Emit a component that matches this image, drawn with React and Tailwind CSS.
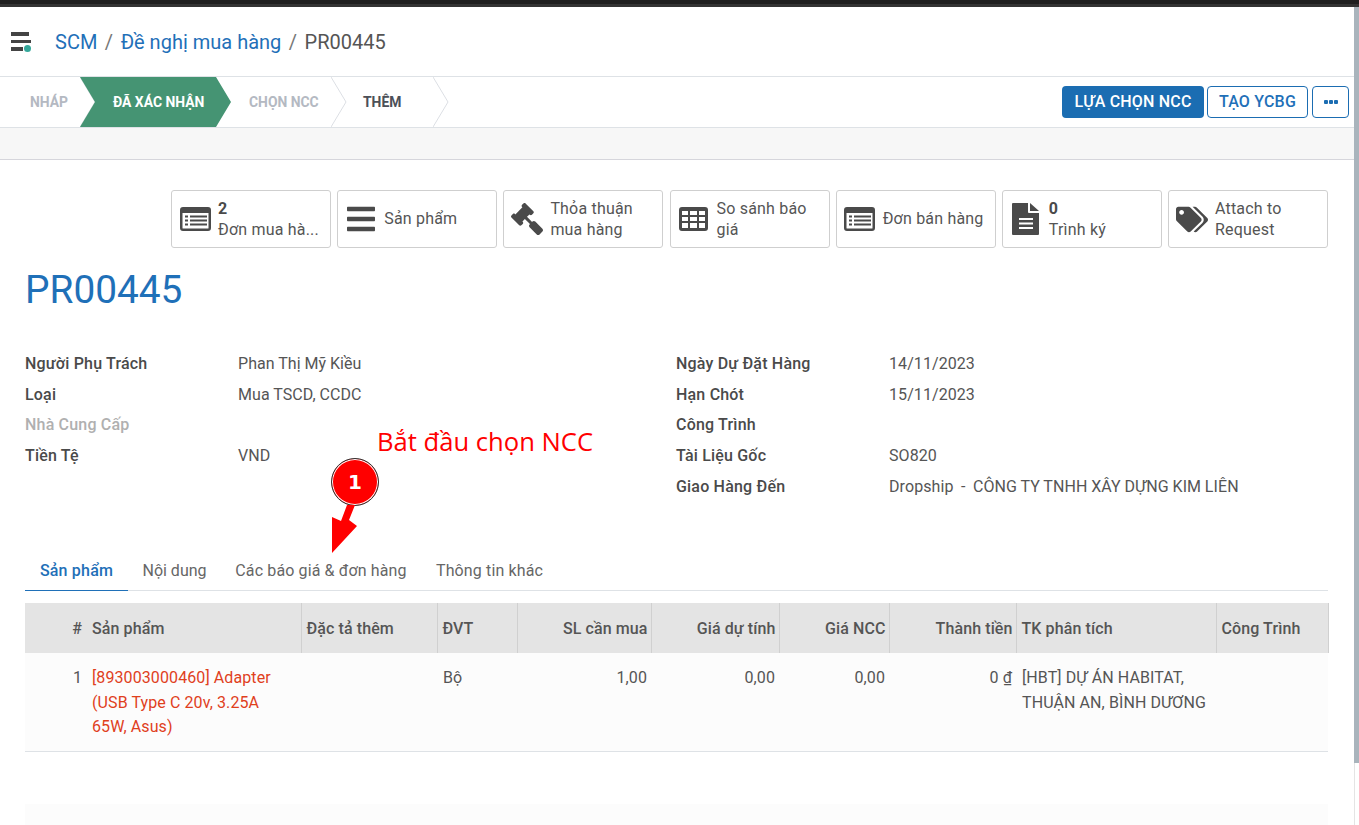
import React from 'react';
import { FaBars, FaGavel, FaTags } from 'react-icons/fa';

const ListAltIcon = () => (
  <svg viewBox="0 0 31 24" className="h-[24px] w-[31px]">
    <path fill="#4a4a4a" fillRule="evenodd" d="M3 0h25a3 3 0 0 1 3 3v18a3 3 0 0 1-3 3H3a3 3 0 0 1-3-3V3a3 3 0 0 1 3-3zM2.500 6v15a.5.5 0 0 0 .5.5h25a.5.5 0 0 0 .5-.5V6z" />
    <path fill="#4a4a4a" d="M5 8.500h3v2H5zM10 8.500h17v2H10zM5 12.500h3v2H5zM10 12.500h17v2H10zM5 16.500h3v2H5zM10 16.500h17v2H10z" />
  </svg>
);

const TableIcon = () => (
  <svg viewBox="0 0 29 24" className="h-[24px] w-[29px]">
    <path fill="#4a4a4a" fillRule="evenodd" d="M3 0h23a3 3 0 0 1 3 3v18a3 3 0 0 1-3 3H3a3 3 0 0 1-3-3V3a3 3 0 0 1 3-3zM3 4v4h6V4zM11 4v4h7V4zM20 4v4h6V4zM3 10v4h6v-4zM11 10v4h7v-4zM20 10v4h6v-4zM3 16v5h6v-5zM11 16v5h7v-5zM20 16v5h6v-5z" />
  </svg>
);

const FileIcon = () => (
  <svg viewBox="0 0 27 32" className="h-[32px] w-[27px]">
    <path fill="#4a4a4a" d="M1 0h15v9a1 1 0 0 0 1 1h10v21a1 1 0 0 1-1 1H1a1 1 0 0 1-1-1V1a1 1 0 0 1 1-1z" />
    <path fill="#4a4a4a" d="M18 0l9 8h-9z" />
    <path fill="#fff" d="M7 15h14v2H7zM7 19.500h14v2H7zM7 24h14v2H7z" />
  </svg>
);

const steps = [
  { label: 'NHÁP', width: 'w-[80px]', pad: 'pl-[30px]', color: 'text-[#b4b9c2]' },
  { label: 'ĐÃ XÁC NHẬN', width: 'w-[136px]', pad: 'pl-[33px]', color: 'text-white', active: true },
  { label: 'CHỌN NCC', width: 'w-[115px]', pad: 'pl-[33px]', color: 'text-[#b4b9c2]' },
  { label: 'THÊM', width: 'w-[102px]', pad: 'pl-[32px]', color: 'text-[#4c5058]' },
];

const smartButtons = [
  { icon: <ListAltIcon />, lines: ['2', 'Đơn mua hà...'], count: true },
  { icon: <FaBars className="h-[32px] w-[28px]" />, lines: ['Sản phẩm'] },
  { icon: <FaGavel className="h-[32px] w-[32px] -scale-x-100" />, lines: ['Thỏa thuận', 'mua hàng'] },
  { icon: <TableIcon />, lines: ['So sánh báo', 'giá'] },
  { icon: <ListAltIcon />, lines: ['Đơn bán hàng'] },
  { icon: <FileIcon />, lines: ['0', 'Trình ký'], count: true },
  { icon: <FaTags className="h-[29px] w-[36px]" />, lines: ['Attach to', 'Request'] },
];

const leftFields = [
  ['Người Phụ Trách', 'Phan Thị Mỹ Kiều'],
  ['Loại', 'Mua TSCD, CCDC'],
  ['Nhà Cung Cấp', '', true],
  ['Tiền Tệ', 'VND'],
];

const rightFields = [
  ['Ngày Dự Đặt Hàng', '14/11/2023'],
  ['Hạn Chót', '15/11/2023'],
  ['Công Trình', ''],
  ['Tài Liệu Gốc', 'SO820'],
  ['Giao Hàng Đến', 'Dropship  -  CÔNG TY TNHH XÂY DỰNG KIM LIÊN'],
];

const tabs = [
  { label: 'Sản phẩm', width: 'w-[103px]', track: 'tracking-[0.012em]' },
  { label: 'Nội dung', width: 'w-[93px]', track: 'tracking-normal' },
  { label: 'Các báo giá & đơn hàng', width: 'w-[200px]', track: 'tracking-[0.008em]' },
  { label: 'Thông tin khác', width: 'w-[137px]', track: 'tracking-[0.008em]' },
];

const columns = [
  { label: '#', width: 'w-[62px]', align: 'text-right pr-[5px]' },
  { label: 'Sản phẩm', width: 'w-[214px]', align: 'text-left px-[5px] border-r border-[#d0d0d0]' },
  { label: 'Đặc tả thêm', width: 'w-[136px]', align: 'text-left px-[5px] border-r border-[#d0d0d0]' },
  { label: 'ĐVT', width: 'w-[80px]', align: 'text-left px-[5px] border-r border-[#d0d0d0]' },
  { label: 'SL cần mua', width: 'w-[134px]', align: 'text-right pl-[4px] pr-[3px] border-r border-[#d0d0d0]' },
  { label: 'Giá dự tính', width: 'w-[128px]', align: 'text-right pl-[4px] pr-[3px] border-r border-[#d0d0d0]' },
  { label: 'Giá NCC', width: 'w-[110px]', align: 'text-right pl-[4px] pr-[3px] border-r border-[#d0d0d0]' },
  { label: 'Thành tiền', width: 'w-[127px]', align: 'text-right pl-[4px] pr-[3px] border-r border-[#d0d0d0]' },
  { label: 'TK phân tích', width: 'w-[200px]', align: 'text-left px-[5px] border-r border-[#d0d0d0]' },
  { label: 'Công Trình', width: 'w-[112px]', align: 'text-left px-[5px] border-r border-[#d0d0d0]' },
];

function FieldList({ fields, labelWidth }) {
  return (
    <div className="flex flex-col">
      {fields.map(([label, value, muted]) => (
        <div key={label} className="flex h-[30.7px] items-center">
          <div className={`${labelWidth} shrink-0 font-medium ${muted ? 'text-[#b0b0b0]' : 'text-[#4a4a4a]'}`}>{label}</div>
          <div className="whitespace-pre tracking-[0.005em] text-[#555] [word-spacing:-0.3px]">{value}</div>
        </div>
      ))}
    </div>
  );
}

export default function App() {
  return (
    <div className="relative flex h-[825px] w-full flex-col overflow-hidden bg-white font-['Roboto',sans-serif] text-base tracking-[0.012em] text-[#4a4a4a]">
      {/* Browser strip */}
      <div className="h-[7px] shrink-0 border-b-[3px] border-[#333] bg-[#1f1f1f]" />

      <div className="flex min-h-0 flex-1">
        <div className="min-w-0 flex-1">
          {/* Breadcrumb */}
          <div className="flex h-[69px] items-center">
            <svg viewBox="0 0 21 20" className="ml-[11px] h-[20px] w-[21px]">
              <path fill="#444" d="M0 0h18v4H0zM0 8h20v3H0zM0 15h12v4H0z" />
              <circle cx="16.500" cy="16.500" r="3.500" fill="#35a89b" />
            </svg>
            <div className="ml-[23px] flex items-center text-[20px] tracking-normal text-[#1f70b8]">
              <span>SCM</span>
              <span className="mx-[7.500px] text-[#777]">/</span>
              <span>Đề nghị mua hàng</span>
              <span className="mx-[7.500px] text-[#777]">/</span>
              <span className="text-[#555]">PR00445</span>
            </div>
          </div>

          {/* Status bar */}
          <div className="flex h-[52px] items-center justify-between border-y border-[#dee2e6] pr-[5px]">
            <div className="flex h-full">
              {steps.map((s) => (
                <div key={s.label} className={`relative flex h-full items-center ${s.width} ${s.pad}`}>
                  {s.active ? (
                    <svg viewBox="0 0 151 50" className="absolute left-0 top-0 h-full w-[151px]" preserveAspectRatio="none">
                      <path fill="#459473" d="M0 0h136l15 25-15 25H0l15-25z" />
                    </svg>
                  ) : (
                    <svg viewBox="0 0 16 50" className="absolute left-full top-0 h-full w-[16px]" preserveAspectRatio="none">
                      <path fill="none" stroke="#dcdfe4" d="M0 0l15 25L0 50" />
                    </svg>
                  )}
                  <span className={`relative whitespace-nowrap text-[13.900px] font-bold leading-[20px] tracking-normal ${s.color}`}>{s.label}</span>
                </div>
              ))}
            </div>
            <div className="flex items-center gap-[3px]">
              <button className="h-[32px] w-[142px] rounded-[4px] bg-[#1b6db2] text-[16px] font-medium text-white">LỰA CHỌN NCC</button>
              <button className="h-[32px] w-[101px] rounded-[4px] border border-[#1b6db2] bg-white text-[16px] font-medium text-[#1f70b8]">TẠO YCBG</button>
              <button className="ml-[1px] flex h-[32px] w-[37px] items-center justify-center gap-[1px] rounded-[4px] border border-[#1b6db2] bg-white">
                <span className="h-[4px] w-[4px] rounded-[1px] bg-[#1b6db2]" />
                <span className="h-[4px] w-[4px] rounded-[1px] bg-[#1b6db2]" />
                <span className="h-[4px] w-[4px] rounded-[1px] bg-[#1b6db2]" />
              </button>
            </div>
          </div>

          {/* Gray strip */}
          <div className="h-[32px] border-b border-[#d6d6dc] bg-[#f7f7f7]" />

          {/* Sheet */}
          <div className="w-[1328px] pl-[25px] pt-[30px]">
            <div className="flex justify-end gap-[6.170px]">
              {smartButtons.map((b, i) => (
                <div key={i} className="flex h-[58px] w-[160px] items-center rounded-[3px] border border-[#cfcfcf] pl-[7px]">
                  <div className="flex w-[32px] shrink-0 justify-center text-[#4a4a4a]">{b.icon}</div>
                  <div className={`pl-[7px] leading-[21px] text-[#555] ${b.lines.length === 1 ? 'mb-[2px]' : ''}`}>
                    {b.lines.map((line, j) => (
                      <div key={j} className={b.count && j === 0 ? 'font-bold text-[#4a4a4a]' : ''}>{line}</div>
                    ))}
                  </div>
                </div>
              ))}
            </div>

            <h1 className="mt-[19px] text-[38.800px] font-normal leading-[46px] tracking-normal text-[#1f70b8]">PR00445</h1>

            <div className="mt-[35.700px] flex">
              <div className="w-[651px]">
                <FieldList fields={leftFields} labelWidth="w-[213px]" />
              </div>
              <FieldList fields={rightFields} labelWidth="w-[213px]" />
            </div>

            {/* Tabs */}
            <div className="mt-[48.300px] flex h-[41px] border-b border-[#dee2e6]">
              {tabs.map((t, i) => (
                <div key={t.label} className={`flex h-[41px] items-center justify-center ${t.width} ${t.track} ${i === 0 ? 'border-b border-[#1f70b8] pt-[1px] font-medium text-[#1f70b8]' : 'text-[#666]'}`}>
                  {t.label}
                </div>
              ))}
            </div>

            {/* Lines table */}
            <table className="mt-[12px] w-[1303px] table-fixed border-collapse tracking-[0.006em]">
              <thead>
                <tr className="h-[50px] bg-[#e4e4e4]">
                  {columns.map((c) => (
                    <th key={c.label} className={`${c.width} ${c.align} pt-[1px] font-medium text-[#555]`}>
                      {c.label}
                    </th>
                  ))}
                </tr>
              </thead>
              <tbody>
                <tr className="h-[98px] border-b border-[#dee2e6] bg-[#fcfcfc] align-top leading-[24.500px] text-[#555]">
                  <td className="pr-[5px] pt-[12.600px] text-right">1</td>
                  <td className="pl-[5px] pr-[14px] pt-[12.600px] text-[#e0401c]">[893003000460] Adapter (USB Type C 20v, 3.25A 65W, Asus)</td>
                  <td />
                  <td className="pl-[6px] pt-[12.600px]">Bộ</td>
                  <td className="px-[4px] pt-[12.600px] text-right">1,00</td>
                  <td className="px-[4px] pt-[12.600px] text-right">0,00</td>
                  <td className="px-[4px] pt-[12.600px] text-right">0,00</td>
                  <td className="px-[4px] pt-[12.600px] text-right">0 ₫</td>
                  <td className="pl-[6px] pr-[4px] pt-[12.600px]">[HBT] DỰ ÁN HABITAT, THUẬN AN, BÌNH DƯƠNG</td>
                  <td />
                </tr>
              </tbody>
            </table>

            <div className="mt-[52px] h-[40px] bg-[#fcfcfc]" />
          </div>
        </div>

        {/* Scrollbar */}
        <div className="w-[5px] shrink-0 border-l border-[#e4e4e4]">
          <div className="-ml-px h-[756px] w-[5px] bg-[#a9b4bc]" />
        </div>
      </div>

      {/* Tutorial annotation over the page */}
      <div className="absolute left-[377px] top-[424px] font-['Open_Sans',sans-serif] text-[25.600px] leading-[36px] tracking-normal text-[#ff0000]">Bắt đầu chọn NCC</div>
      <div className="absolute left-[331px] top-[458px] flex h-[48px] w-[48px] items-center justify-center rounded-full border-[1.500px] border-[#333] bg-[#ff0000] font-['DejaVu_Sans',sans-serif] text-[20px] font-bold text-white shadow-[inset_0_0_0_1px_#fff]">1</div>
      <svg viewBox="0 0 30 50" className="absolute left-[330px] top-[505px] h-[50px] w-[30px]">
        <path fill="#ff0000" d="M17 0h8l-6 15 8 6L2 48V12l9 4z" />
      </svg>
    </div>
  );
}
